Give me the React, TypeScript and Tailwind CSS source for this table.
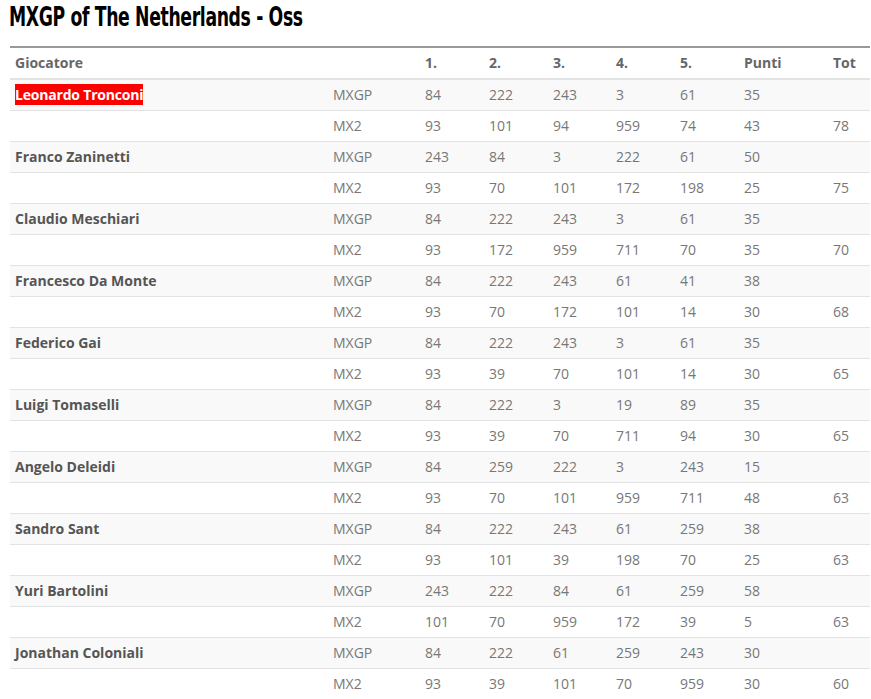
import React from "react";

interface Riga {
  nome: string
  mxgp: string[]
  mx2: string[]
  tot: string
  evidenziato?: boolean
}

const righe: Riga[] = [
  { nome: "Leonardo Tronconi", mxgp: ["84", "222", "243", "3", "61", "35"], mx2: ["93", "101", "94", "959", "74", "43"], tot: "78", evidenziato: true },
  { nome: "Franco Zaninetti", mxgp: ["243", "84", "3", "222", "61", "50"], mx2: ["93", "70", "101", "172", "198", "25"], tot: "75" },
  { nome: "Claudio Meschiari", mxgp: ["84", "222", "243", "3", "61", "35"], mx2: ["93", "172", "959", "711", "70", "35"], tot: "70" },
  { nome: "Francesco Da Monte", mxgp: ["84", "222", "243", "61", "41", "38"], mx2: ["93", "70", "172", "101", "14", "30"], tot: "68" },
  { nome: "Federico Gai", mxgp: ["84", "222", "243", "3", "61", "35"], mx2: ["93", "39", "70", "101", "14", "30"], tot: "65" },
  { nome: "Luigi Tomaselli", mxgp: ["84", "222", "3", "19", "89", "35"], mx2: ["93", "39", "70", "711", "94", "30"], tot: "65" },
  { nome: "Angelo Deleidi", mxgp: ["84", "259", "222", "3", "243", "15"], mx2: ["93", "70", "101", "959", "711", "48"], tot: "63" },
  { nome: "Sandro Sant", mxgp: ["84", "222", "243", "61", "259", "38"], mx2: ["93", "101", "39", "198", "70", "25"], tot: "63" },
  { nome: "Yuri Bartolini", mxgp: ["243", "222", "84", "61", "259", "58"], mx2: ["101", "70", "959", "172", "39", "5"], tot: "63" },
  { nome: "Jonathan Coloniali", mxgp: ["84", "222", "61", "259", "243", "30"], mx2: ["93", "39", "101", "70", "959", "30"], tot: "60" },
];

const colonne = ["1.", "2.", "3.", "4.", "5.", "Punti"];

const App: React.FC = () => {
  return (
    <div className="bg-white pl-[10px] h-[699px] overflow-hidden" style={{ fontFamily: '"Open Sans", sans-serif' }}>
      <h1
        className="text-[27px] font-bold text-black leading-[32px] pt-[1px] pb-[13px] -ml-[1px] font-stretch-condensed tracking-[-0.5px] scale-x-[0.71] origin-left whitespace-nowrap"
        style={{ fontFamily: '"Liberation Sans Narrow", "DejaVu Sans", sans-serif' }}
      >
        MXGP of The Netherlands - Oss
      </h1>
      <table className="table-fixed border-collapse w-[860px] text-[14px] text-[#777]">
        <colgroup>
          <col className="w-[318px]" />
          <col className="w-[92px]" />
          <col className="w-[64px]" />
          <col className="w-[64px]" />
          <col className="w-[63px]" />
          <col className="w-[64px]" />
          <col className="w-[64px]" />
          <col className="w-[89px]" />
          <col className="w-[42px]" />
        </colgroup>
        <thead>
          <tr className="border-t-2 border-t-[#999] border-b-2 border-b-[#e3e3e3] h-[32px]">
            <th className="text-left font-bold text-[#666] pl-[5px] pb-[1px]">Giocatore</th>
            <th></th>
            {colonne.map((c) => (
              <th key={c} className="text-left font-bold text-[#666] pl-[5px] pb-[1px]">{c}</th>
            ))}
            <th className="text-left font-bold text-[#666] pl-[5px] pb-[1px]">Tot</th>
          </tr>
        </thead>
        <tbody>
          {righe.map((r) => (
            <React.Fragment key={r.nome}>
              <tr className="bg-[#f9f9f9] border-b border-[#e3e3e3] h-[31px]">
                <td className="pl-[5px] font-bold text-[#555]">
                  {r.evidenziato ? (
                    <span className="bg-[#f00] text-white py-[1px] tracking-[-0.2px]">{r.nome}</span>
                  ) : r.nome}
                </td>
                <td className="pl-[5px]">MXGP</td>
                {r.mxgp.map((v, i) => (
                  <td key={i} className="pl-[5px]">{v}</td>
                ))}
                <td></td>
              </tr>
              <tr className="bg-white border-b border-[#e3e3e3] h-[31px]">
                <td></td>
                <td className="pl-[5px]">MX2</td>
                {r.mx2.map((v, i) => (
                  <td key={i} className="pl-[5px]">{v}</td>
                ))}
                <td className="pl-[5px]">{r.tot}</td>
              </tr>
            </React.Fragment>
          ))}
        </tbody>
      </table>
    </div>
  );
};

export default App;
